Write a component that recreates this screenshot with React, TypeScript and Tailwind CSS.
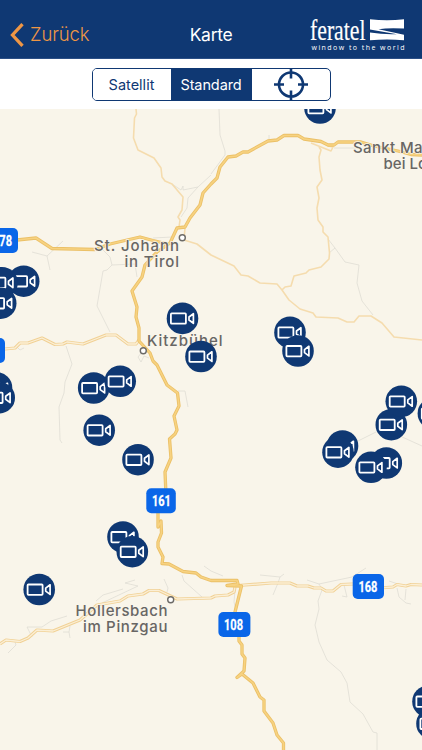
import { useState } from "react";

type Road = { d: string; kind: "major" | "double" | "thin" | "path" };

const roads: Road[] = [
  // small paths
  { kind: "path", d: "M219 109L220 135L225 151L225 155L211 174" },
  { kind: "path", d: "M211 175L198 187L183 190L183 186L181 190L172 184" },
  { kind: "path", d: "M198 187L188 198L187 208L181 217" },
  { kind: "path", d: "M269 135L269 141M334 148L361 148" },
  { kind: "path", d: "M32 252L47 256L50 270M47 256L63 241" },
  { kind: "path", d: "M103 250L110 257L112 265L135 264M112 265L107 270L103 271L97 306L110 332" },
  { kind: "path", d: "M153 238L172 237M135 264L137 277" },
  { kind: "path", d: "M328 239L335 248L329 253M335 248L345 262L359 265L357 283L362 301L373 315" },
  { kind: "path", d: "M66 346L72 364L65 382L64 393L59 407L60 440L62 443" },
  { kind: "path", d: "M17 347L20 350L24 348M142 352L138 357L141 362L144 356L149 358" },
  { kind: "path", d: "M178 391L185 391L188 407" },
  { kind: "path", d: "M350 445L376 432M400 436L422 446" },
  { kind: "path", d: "M204 566L211 571L223 576M182 575L184 581L202 597M164 579L168 588L167 592" },
  { kind: "path", d: "M96 601L103 595L123 589M102 603L138 586L125 583L135 580" },
  { kind: "path", d: "M8 653L16 645L15 642M32 637L27 627L42 627L51 621L67 616M63 632L69 632L70 638M69 632L70 626" },
  { kind: "path", d: "M260 575L280 577L284 574M280 577L278 583L273 595" },
  { kind: "path", d: "M307 580L319 584L352 577L366 568M319 584L322 589" },
  { kind: "path", d: "M322 590L318 601L319 609L315 625L319 642L327 660L341 672L347 683L350 702L363 714L373 732L377 733L377 750" },
  { kind: "path", d: "M344 585L347 597L342 596M389 581L398 584M397 588L399 597L406 603L411 604M406 589L405 600" },
  { kind: "path", d: "M235 590L234 602L236 611" },
  // minor roads
  { kind: "thin", d: "M136 109L136.500 114L134.500 118L133.500 138L138 150L154 158L161 168L162 177L165 181L172 184L183 197L182 210L178 217L180 220L179 227" },
  { kind: "thin", d: "M185 228L184 240L197 244L211 255L234 266L241 275L248 276L260 283L277 284L282 290L289 300L300 309L313 313L316 317L338 318L347 322L354 322L359 316L371 316L382 323L394 337L422 340" },
  { kind: "thin", d: "M282 290L285 287L291 286L294 276L306 273L309 270L321 267L329 259L329.500 253L328 237L323 232L323 227L318 220L317 208L319 198L317 187L322 180L320 170L319 157L321 150L319 147" },
  { kind: "thin", d: "M311 143L331 151L333 147L328 146" },
  // federal roads with a light centre
  { kind: "double", d: "M0 349.500L15 348L20 343L28 343L42 338L55 344.500L63 344L67 342L83 344L106 335L116 335L128 344L136 344L139 340" },
  { kind: "double", d: "M0 644L6 640L20 641.500L28 638L37 630L53 631L80 620L97 605L120 601L128 596L143 594L149 590.500L159 590.500L177 599L211 598L215 596L228 595L234 592L235 587" },
  { kind: "double", d: "M238 585.500L271 583L290 583L297 586L308 586L314 588L321 588L326 591L333 591L341 584.500L353 584M380 588L393 587L397 584.500L406 586L411 584.500L422 585" },
  // main roads
  { kind: "major", d: "M17 240L36 238L52 248.500L95 249.500L110 244L140 237L153 240.500L168 244" },
  { kind: "major", d: "M157 252L145 265L142 277L132 291L137 307L136 317L139 328L139 341L150 353L153 361L157 365L167 385L177.500 393L179 406L174 416L177 430L175 434L169.500 439L171 458L165 472L166 495L158 506L158 527L161 521L161.500 533L158 542L158 547L163 557L162 563.500L169 564L183 571.500L196 573L201 577L211 580.500L237 580.500L238 584L227 585.500L241.500 586L238 600L235 612L239 636L239 641L242 645L242 654L245 658L244 671L237 677.500L242 674L253 683L260 697L264 700L264 711L273 723L277 735L283.500 743L283.500 750" },
  { kind: "major", d: "M157 252L170 243L177 228L185 227L190 218L200 205L203 193L211 184L217 178L220 167L228 157L236 156L243 152L248 152L268 141L277 140L284 135.500L298 135.500L304 139L321 141.500L328 145L334 145L338 142L361 142L374 146L398 151L411 154.500L422 155" },
];

// later entries lie on top
const cameras = [
  [320, 108],
  [182.5, 318.4],
  [201, 356.5],
  [290, 332.4],
  [298, 351],
  [93.7, 388],
  [120.2, 381.3],
  [99.2, 430.2],
  [138, 459.7],
  [123, 537],
  [132.3, 551.7],
  [39.2, 589.5],
  [23.7, 281.2],
  [2, 282.7],
  [0.7, 303.2],
  [-3.5, 388],
  [-0.8, 397.7],
  [433.4, 413.5],
  [391.3, 424.7],
  [401.3, 401.3],
  [342.5, 446],
  [338, 452.2],
  [386.3, 463],
  [371, 467.3],
  [428, 701.5],
  [432, 723.7],
];

const shields = [
  { label: "178", x: -13.5, y: 228, w: 31.5, tx: -7 },
  { label: "", x: -26, y: 338, w: 31, tx: 0 },
  { label: "161", x: 146.3, y: 488.3, w: 29.5, tx: 151.9 },
  { label: "168", x: 352.7, y: 574, w: 31.3, tx: 358.4 },
  { label: "108", x: 218.4, y: 612, w: 32, tx: 224 },
];

const labels = [
  { text: "St. Johann", x: 94, y: 251, w: 85 },
  { text: "in Tirol", x: 124.5, y: 267.3, w: 54.5 },
  { text: "Kitzbühel", x: 147, y: 346.2, w: 75.5 },
  { text: "Hollersbach", x: 75.5, y: 615.7, w: 92 },
  { text: "im Pinzgau", x: 83, y: 631.7, w: 84.5 },
  { text: "Sankt Ma", x: 353, y: 153.3, w: 69.5 },
  { text: "bei Lo", x: 383.5, y: 169.3, w: 43.5 },
];

const towns = [
  [182.3, 237.7],
  [143.3, 350.8],
  [170.7, 599.8],
];

function RoadLine({ d, kind }: Road) {
  if (kind === "path") {
    return <path d={d} stroke="#e0ddd4" strokeWidth="0.8" />;
  }
  if (kind === "thin") {
    return <path d={d} stroke="#f5dcae" strokeWidth="1.6" />;
  }
  if (kind === "double") {
    return (
      <>
        <path d={d} stroke="#f1d195" strokeWidth="3.200" />
        <path d={d} stroke="#fbefd6" strokeWidth="1.300" />
      </>
    );
  }
  return (
    <>
      <path d={d} stroke="#ebc067" strokeWidth="3.300" />
      <path d={d} stroke="#f7d281" strokeWidth="1.600" />
    </>
  );
}

function CameraPin({ x, y }: { x: number; y: number }) {
  return (
    <g transform={`translate(${x} ${y})`}>
      <circle r="15.800" fill="#0f3873" />
      <rect x="-11.600" y="-5" width="15" height="10.300" rx="0.800" stroke="#fff" strokeWidth="1.800" />
      <path d="M6.500 -1.400L10.900 -4.700V4.900L6.500 1.600Z" stroke="#fff" strokeWidth="1.700" />
    </g>
  );
}

function MapView() {
  return (
    <svg
      className="block h-[641px] w-full bg-[#f9f5ea]"
      viewBox="0 109 422 641"
      fill="none"
      strokeLinejoin="round"
    >
      {roads.map((road, i) => (
        <RoadLine key={i} {...road} />
      ))}

      {towns.map(([x, y]) => (
        <circle key={x} cx={x} cy={y} r="3" fill="#fff" stroke="#6c6a67" strokeWidth="1.400" />
      ))}

      {labels.map((l) => (
        <text
          key={l.text}
          x={l.x}
          y={l.y}
          textLength={l.w}
          fill="#686664"
          stroke="#f9f5ea"
          strokeWidth="1.500"
          paintOrder="stroke"
          className="font-['Inter',sans-serif] text-[15px] font-medium"
        >
          {l.text}
        </text>
      ))}

      {shields.map((s) => (
        <g key={s.y}>
          <rect x={s.x} y={s.y} width={s.w} height="25" rx="5" fill="#0a66e8" />
          {s.label && (
            <text
              x={s.tx}
              y={s.y + 18}
              textLength="19"
              lengthAdjust="spacingAndGlyphs"
              fill="#fff"
              stroke="#fff"
              strokeWidth="0.300"
              className="font-['Roboto',sans-serif] text-[15.5px] font-bold"
            >
              {s.label}
            </text>
          )}
        </g>
      ))}

      {cameras.map(([x, y]) => (
        <CameraPin key={`${x}-${y}`} x={x} y={y} />
      ))}
    </svg>
  );
}

function Logo() {
  return (
    <svg className="block h-10 w-[98px]" viewBox="309 14 98 40" fill="#fff">
      <text
        x="310"
        y="39.700"
        textLength="55.500"
        lengthAdjust="spacingAndGlyphs"
        stroke="#fff"
        strokeWidth="0.200"
        className="font-['Liberation_Serif',serif] text-[30px]"
      >
        feratel
      </text>
      <path d="M370 19.300Q387 21 404 19.300V28.600Q388 27.800 378.500 29.200L404 34.800V40.300Q387 38.800 370 40.300V32.500Q384 34.800 397 34.200L370 29.500Z" />
      <text
        x="311.500"
        y="50.300"
        textLength="93"
        className="font-['Open_Sans',sans-serif] text-[7px] font-medium"
      >
        window to the world
      </text>
    </svg>
  );
}

function Header() {
  return (
    <header className="grid h-[59px] grid-cols-3 border-b border-[#2b4f86] bg-[#0f3873] pt-[14px] font-['Inter',sans-serif]">
      <button className="flex h-[41px] items-center pl-2.5 text-[18.5px] text-[#ee9645]">
        <svg className="mr-[6px] h-6 w-[14px]" viewBox="0 0 14 24" fill="none" stroke="currentColor" strokeWidth="3.300">
          <path d="M12.500 1.200L2.500 12L12.500 22.800" />
        </svg>
        <span className="font-light tracking-[-0.1px]">Zurück</span>
      </button>
      <h1 className="h-[41px] text-center text-[17.5px] leading-[41px] tracking-[-0.3px] text-white">Karte</h1>
      <div className="flex justify-end pr-[15px]">
        <Logo />
      </div>
    </header>
  );
}

function ModeSwitch() {
  const [mode, setMode] = useState("standard");
  const tab = (name: string) => (mode === name ? "bg-[#0f3873] text-white" : "bg-white text-[#0f3873]");

  return (
    <div className="flex h-[50px] justify-center bg-white pt-[9px]">
      <div className="flex h-[33px] w-[239px] overflow-hidden rounded-[5px] border border-[#0f3873] font-['Inter',sans-serif] text-[14.5px]">
        <button className={`w-[78px] ${tab("satellit")}`} onClick={() => setMode("satellit")}>
          Satellit
        </button>
        <button className={`w-[81px] tracking-[-0.1px] ${tab("standard")}`} onClick={() => setMode("standard")}>
          Standard
        </button>
        <button className="flex flex-1 items-center justify-center text-[#0f3873]">
          <svg className="h-[33px] w-[34px]" viewBox="0 0 34 33" fill="none" stroke="currentColor" strokeWidth="2.600">
            <circle cx="17" cy="16.500" r="12" />
            <path d="M17 0.500V10.500M17 22.500V32.500M0 16.500H10M24 16.500H34" />
          </svg>
        </button>
      </div>
    </div>
  );
}

export default function App() {
  return (
    <main className="flex h-[750px] w-[422px] flex-col overflow-hidden bg-white">
      <Header />
      <ModeSwitch />
      <MapView />
    </main>
  );
}
